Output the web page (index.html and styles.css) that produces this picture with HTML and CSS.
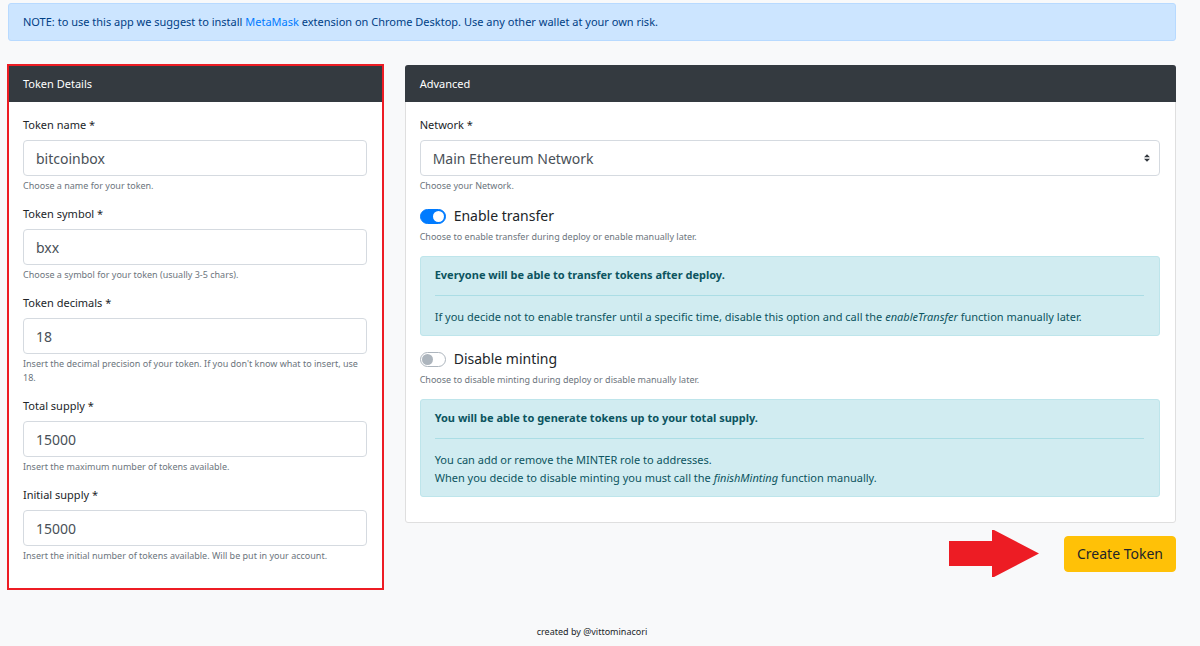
FILE: index.html
```html
<!DOCTYPE html>
<html lang="en">
<head>
    <meta charset="UTF-8">
    <meta name="viewport" content="width=device-width, initial-scale=1.0">
    <title>Create Token</title>
    <link rel="stylesheet" href="styles.css">
</head>
<body>
    <div class="container">
        <div class="alert alert-primary">
            NOTE: to use this app we suggest to install <a href="#">MetaMask</a> extension on Chrome Desktop. Use any other wallet at your own risk.
        </div>

        <form class="row">
            <div class="col-details">
                <div class="card card-highlight">
                    <h2 class="card-header">Token Details</h2>
                    <div class="card-body">
                        <div class="form-group">
                            <label for="tokenName">Token name *</label>
                            <input type="text" id="tokenName" class="form-control" value="bitcoinbox">
                            <small class="form-text">Choose a name for your token.</small>
                        </div>
                        <div class="form-group">
                            <label for="tokenSymbol">Token symbol *</label>
                            <input type="text" id="tokenSymbol" class="form-control" value="bxx">
                            <small class="form-text">Choose a symbol for your token (usually 3-5 chars).</small>
                        </div>
                        <div class="form-group">
                            <label for="tokenDecimals">Token decimals *</label>
                            <input type="text" id="tokenDecimals" class="form-control" value="18">
                            <small class="form-text">Insert the decimal precision of your token. If you don't know what to insert, use 18.</small>
                        </div>
                        <div class="form-group">
                            <label for="totalSupply">Total supply *</label>
                            <input type="text" id="totalSupply" class="form-control" value="15000">
                            <small class="form-text">Insert the maximum number of tokens available.</small>
                        </div>
                        <div class="form-group">
                            <label for="initialSupply">Initial supply *</label>
                            <input type="text" id="initialSupply" class="form-control" value="15000">
                            <small class="form-text">Insert the initial number of tokens available. Will be put in your account.</small>
                        </div>
                    </div>
                </div>
            </div>

            <div class="col-advanced">
                <div class="card">
                    <h2 class="card-header">Advanced</h2>
                    <div class="card-body">
                        <div class="form-group">
                            <label for="network">Network *</label>
                            <select id="network" class="form-control form-select">
                                <option>Main Ethereum Network</option>
                            </select>
                            <small class="form-text">Choose your Network.</small>
                        </div>
                        <div class="form-group">
                            <div class="switch">
                                <input type="checkbox" id="enableTransfer" checked>
                                <label for="enableTransfer">Enable transfer</label>
                            </div>
                            <small class="form-text">Choose to enable transfer during deploy or enable manually later.</small>
                        </div>
                        <div class="alert alert-info">
                            <strong>Everyone will be able to transfer tokens after deploy.</strong>
                            <hr>
                            <p>If you decide not to enable transfer until a specific time, disable this option and call the <i>enableTransfer</i> function manually later.</p>
                        </div>
                        <div class="form-group">
                            <div class="switch">
                                <input type="checkbox" id="disableMinting">
                                <label for="disableMinting">Disable minting</label>
                            </div>
                            <small class="form-text">Choose to disable minting during deploy or disable manually later.</small>
                        </div>
                        <div class="alert alert-info">
                            <strong>You will be able to generate tokens up to your total supply.</strong>
                            <hr>
                            <p>You can add or remove the MINTER role to addresses.<br>When you decide to disable minting you must call the <i>finishMinting</i> function manually.</p>
                        </div>
                    </div>
                </div>
                <div class="actions">
                    <svg class="arrow" width="90" height="47" viewBox="0 0 90 47" aria-hidden="true">
                        <path d="M0 11H43V0H45L90 23.5L45 47H43V36H0Z" fill="#ed1c24"/>
                    </svg>
                    <button type="submit" class="btn btn-warning">Create Token</button>
                </div>
            </div>
        </form>

        <footer class="footer">created by <a href="#">@vittominacori</a></footer>
    </div>
</body>
</html>
```

FILE: styles.css
```css
* {
    box-sizing: border-box;
}

body {
    margin: 0;
    font-family: "Segoe UI", "Noto Sans", sans-serif;
    font-size: 11px;
    line-height: 18px;
    color: #212529;
    background-color: #f8f9fa;
}

a {
    color: #007bff;
    text-decoration: none;
}

.container {
    padding: 3px 24px 0 8px;
}

.row {
    display: grid;
    grid-template-columns: repeat(12, 1fr);
    column-gap: 22px;
    align-items: start;
    margin-top: 24px;
}

.col-details {
    grid-column: span 4;
}

.col-advanced {
    grid-column: span 8;
}

/* Cards */
.card {
    background-color: #fff;
    border: 1px solid #dfdfdf;
    border-radius: 3px;
}

.card-header {
    margin: -1px -1px 0;
    padding: 10px 15px 9px;
    font-size: 11px;
    font-weight: normal;
    color: #fff;
    background-color: #343a40;
    border-radius: 3px 3px 0 0;
}

.card-highlight {
    border-radius: 0;
    outline: 2px solid #ed1c24;
    outline-offset: -1px;
}

.card-body {
    padding: 14px 15px 13px 14px;
}

/* Alerts */
.alert {
    padding: 9px 15px 9px 14px;
    border: 1px solid;
    border-radius: 3px;
}

.alert-primary {
    color: #004085;
    background-color: #cce5ff;
    border-color: #b8daff;
}

.alert-info {
    margin-bottom: 12px;
    color: #0c5460;
    background-color: #d1ecf1;
    border-color: #bee5eb;
}

.alert strong {
    display: block;
}

.alert hr {
    margin: 11px 0 12px;
    border: 0;
    border-top: 1px solid #abdde5;
}

.alert p {
    margin: 0;
}

/* Form */
.form-group {
    margin-bottom: 12px;
}

.form-group label {
    display: block;
    margin-bottom: 6px;
}

.form-control {
    display: block;
    width: 100%;
    height: 36px;
    padding: 1px 12px 0;
    font-family: inherit;
    font-size: 14px;
    color: #495057;
    background-color: #fff;
    border: 1px solid #d5dae0;
    border-radius: 4px;
}

.form-select {
    appearance: none;
    background: #fff url("data:image/svg+xml,%3Csvg xmlns='http://www.w3.org/2000/svg' viewBox='0 0 4 5'%3E%3Cpath fill='%23343a40' d='M2 0L0 2h4zm0 5L0 3h4z'/%3E%3C/svg%3E") no-repeat right 9px center / 6px 8px;
}

.form-text {
    display: block;
    margin-top: 3px;
    font-size: 9px;
    line-height: 14px;
    color: #6c757d;
}

.switch {
    display: flex;
    align-items: center;
    gap: 8px;
    height: 22px;
}

.switch label {
    margin: 0;
    font-size: 14px;
}

.switch input {
    appearance: none;
    width: 26px;
    height: 15px;
    margin: 0;
    padding: 1px;
    background-color: #fff;
    border: 1px solid #adb5bd;
    border-radius: 8px;
}

.switch input::before {
    content: "";
    display: block;
    width: 11px;
    height: 11px;
    background-color: #adb5bd;
    border-radius: 50%;
}

.switch input:checked {
    background-color: #007bff;
    border-color: #007bff;
}

.switch input:checked::before {
    margin-left: auto;
    background-color: #fff;
}

/* Submit */
.actions {
    display: flex;
    justify-content: flex-end;
    align-items: center;
    gap: 25px;
    margin-top: 7px;
}

.btn {
    height: 36px;
    padding: 0 12px;
    font-family: inherit;
    font-size: 14px;
    border: 1px solid;
    border-radius: 4px;
    cursor: pointer;
}

.btn-warning {
    color: #212529;
    background-color: #ffc107;
    border-color: #ffc107;
}

.footer {
    margin-top: 34px;
    font-size: 9px;
    text-align: center;
}

.footer a {
    color: inherit;
}
```
